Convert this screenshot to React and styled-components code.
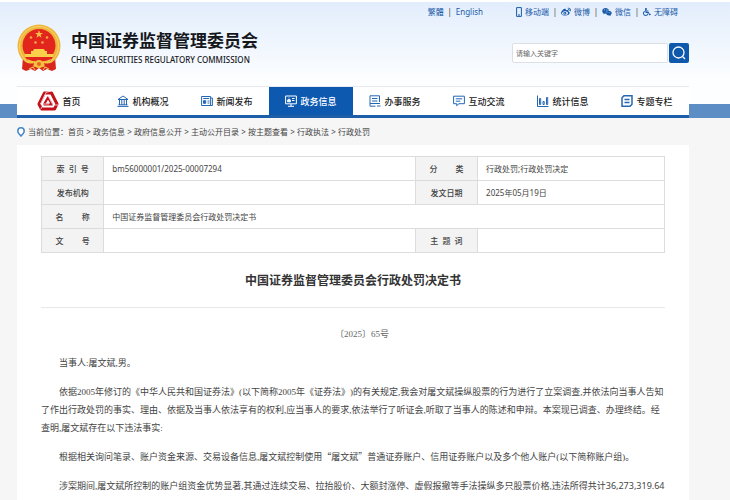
import React from "react";
import styled, { createGlobalStyle } from "styled-components";
import { FaWeibo, FaWeixin, FaWheelchair } from "react-icons/fa";

const SANS = `"Noto Sans", "Noto Sans CJK SC", sans-serif`;
const SERIF = `"Liberation Serif", "Noto Sans CJK SC", serif`;

const navItems = [
  { label: "首页", icon: "home" },
  { label: "机构概况", icon: "bank" },
  { label: "新闻发布", icon: "news" },
  { label: "政务信息", icon: "screen", active: true },
  { label: "办事服务", icon: "service" },
  { label: "互动交流", icon: "chat" },
  { label: "统计信息", icon: "stats" },
  { label: "专题专栏", icon: "topic" },
];

const crumbs = [
  "首页",
  "政务信息",
  "政府信息公开",
  "主动公开目录",
  "按主题查看",
  "行政执法",
  "行政处罚",
];

const Emblem = () => (
  <EmblemSvg viewBox="0 0 44 47" aria-hidden="true">
    <path d="M6 33L5 45l4 2 5-2 4 2 4-3 4 3 4-2 5 2 4-2-1-12z" fill="#d9261c" />
    <circle cx="22" cy="22" r="21.5" fill="#efb63c" />
    <circle cx="22" cy="22" r="19.5" fill="none" stroke="#f8d470" strokeWidth="1" />
    <circle cx="22" cy="21.5" r="16.5" fill="#e3261d" />
    <path d="M22 6l1 3h3l-2.400 1.800.9 2.900L22 12l-2.500 1.700.9-2.900L18 9h3z" fill="#fbc04a" />
    <g fill="#f7a545">
      <circle cx="14" cy="13.500" r="1.300" />
      <circle cx="30" cy="13.500" r="1.300" />
      <circle cx="18.500" cy="18.500" r="1.300" />
      <circle cx="25.500" cy="18.500" r="1.300" />
    </g>
    <path d="M17 25h10l1 2h-12zM14 27h16v3H14zM8 30h28v3H8z" fill="#fbd04a" />
    <path d="M8 33h28l-3 4H11z" fill="#e3261d" />
    <path d="M10 35q12 6 24 0l-2 4q-10 5-20 0z" fill="#f6c33f" />
    <circle cx="22" cy="40" r="4" fill="#f4c03f" />
    <circle cx="22" cy="40" r="2" fill="#e5622a" />
    <path d="M6 36q5 5 11 3l-1 4q-5 1-10-1zM38 36q-5 5-11 3l1 4q5 1 10-1z" fill="#d9261c" />
    <path d="M12 45l4-2 2 3M32 45l-4-2-2 3" stroke="#f6cf5d" fill="none" />
  </EmblemSvg>
);

const HomeMark = () => (
  <HomeSvg viewBox="0 0 22 20" aria-hidden="true">
    <g fill="none" stroke="#c4101a" strokeWidth="3" strokeLinejoin="round">
      <path d="M7.500 2h7l5.500 11-2.500 5h-13L2 13z" />
      <path d="M11 6.500l4 7H7z" strokeWidth="2.200" />
    </g>
    <g fill="none" stroke="#fff" strokeWidth="0.700">
      <path d="M14 0L9 1.500 3.500 13H12" />
      <path d="M21 14h-5L10.500 4" />
      <path d="M3.500 18.500L6.500 13.500" />
    </g>
  </HomeSvg>
);

const iconShapes = {
  bank: (
    <>
      <path d="M1 4.500L6 1l5 3.500zM0.500 11.400h11M1.500 9.800h9" />
      <path d="M2.500 5v5M4.800 5v5M7.200 5v5M9.500 5v5" />
    </>
  ),
  news: (
    <>
      <path d="M0.600 1.500h9v9h-9zM9.600 3h1.800v7.500H9" />
      <path d="M2.200 3.500h6M6.500 6h2M6.500 8h2" />
      <path d="M2.500 5.700h2.200v2.600H2.500z" fill="currentColor" />
    </>
  ),
  screen: (
    <>
      <path d="M0.600 1h10.800v7.800H0.600zM6 9v2M3 11.300h6" />
      <path d="M2.500 5.500q0-1 1-1h1q1 0 1 1v1.300h-3z" fill="currentColor" />
      <path d="M3.600 3h0.800M7 3.500h2.500M7 5.500h2.500" />
    </>
  ),
  service: (
    <>
      <path d="M10.500 7V0.800H1v10.400h5.500" />
      <path d="M3 3.500h5.500M3 6h5.500M1 8.500h10M8 11h3.500" />
    </>
  ),
  chat: (
    <>
      <path d="M0.600 1.200h10.800v7.500H6l-2.300 2V8.700H0.600z" />
      <path d="M2.800 3.800h6.500M2.800 6.200h4.500" />
    </>
  ),
  stats: (
    <>
      <path d="M0.500 0.500v11h11" />
      <path d="M2.500 3.500h1.200V9.500H2.500zM6 6.500h1.200v3H6zM9.500 2.500h1.200v7H9.500z" />
    </>
  ),
  topic: (
    <>
      <path d="M3 0.700h8v8.600L9 11.300H1V2.700z" strokeWidth="1.500" />
      <path d="M3.500 4.500h5M3.500 7.500h5" strokeWidth="1.300" />
    </>
  ),
};

const NavIcon = ({ name }) =>
  name === "home" ? (
    <HomeMark />
  ) : (
    <LineIcon viewBox="0 0 12 12" aria-hidden="true">
      {iconShapes[name]}
    </LineIcon>
  );

const App = () => {
  return (
    <>
      <GlobalStyle />
      <Page>
        <Header>
          <Container>
            <HeaderInner>
              <Brand href="#">
                <Emblem />
                <BrandText>
                  <BrandName>中国证券监督管理委员会</BrandName>
                  <BrandEnglish>CHINA SECURITIES REGULATORY COMMISSION</BrandEnglish>
                </BrandText>
              </Brand>
              <Tools>
                <TopLinks>
                  <LinkGroup>
                    <TopLink href="#">繁體</TopLink>
                    <Bar>|</Bar>
                    <TopLink href="#">English</TopLink>
                  </LinkGroup>
                  <LinkGroup>
                    <TopLink href="#">
                      <PhoneIcon viewBox="0 0 6 10" aria-hidden="true">
                        <path d="M0.600 0.600h4.800v8.800H0.600zM2 8h2" />
                      </PhoneIcon>
                      移动端
                    </TopLink>
                    <Bar>|</Bar>
                    <TopLink href="#">
                      <FaWeibo size={10} />
                      微博
                    </TopLink>
                    <Bar>|</Bar>
                    <TopLink href="#">
                      <FaWeixin size={10} />
                      微信
                    </TopLink>
                    <Bar>|</Bar>
                    <TopLink href="#">
                      <FaWheelchair size={8} />
                      无障碍
                    </TopLink>
                  </LinkGroup>
                </TopLinks>
                <Search onSubmit={(e) => e.preventDefault()}>
                  <SearchInput aria-label="请输入关键字" placeholder="请输入关键字" />
                  <SearchButton aria-label="搜索">
                    <svg viewBox="0 0 14 14" width="14" height="14" aria-hidden="true">
                      <circle cx="6.500" cy="6.500" r="5.500" />
                      <path d="M10.500 10.500l2.500 2.500" />
                    </svg>
                  </SearchButton>
                </Search>
              </Tools>
            </HeaderInner>
          </Container>
          <NavBand>
            <Container>
              <Nav>
                {navItems.map((item) => (
                  <NavLink href="#" key={item.label} $active={item.active}>
                    <NavIcon name={item.icon} />
                    {item.label}
                  </NavLink>
                ))}
              </Nav>
            </Container>
          </NavBand>
        </Header>

        <Container>
          <Breadcrumb>
            <PinIcon viewBox="0 0 8 10" aria-hidden="true">
              <path d="M4 9L1.800 6.500Q0.800 5.300 0.800 4a3.200 3.200 0 0 1 6.400 0Q7.200 5.300 6.200 6.500z" />
            </PinIcon>
            <span>当前位置：</span>
            {crumbs.map((crumb, i) => (
              <React.Fragment key={crumb}>
                {i > 0 && <Arrow>&gt;</Arrow>}
                <a href="#">{crumb}</a>
              </React.Fragment>
            ))}
          </Breadcrumb>
        </Container>

        <Panel>
          <InfoTable>
            <colgroup>
              <Col $width="10%" />
              <Col $width="50%" />
              <Col $width="10%" />
              <Col $width="30%" />
            </colgroup>
            <tbody>
              <tr>
                <Label>索&nbsp;&nbsp;引&nbsp;&nbsp;号</Label>
                <Value>bm56000001/2025-00007294</Value>
                <Label>分&#12288;&#12288;&nbsp;类</Label>
                <Value>行政处罚;行政处罚决定</Value>
              </tr>
              <tr>
                <Label>发布机构</Label>
                <Value />
                <Label>发文日期</Label>
                <Value>2025年05月19日</Value>
              </tr>
              <tr>
                <Label>名&#12288;&#12288;&nbsp;称</Label>
                <Value colSpan={3}>中国证券监督管理委员会行政处罚决定书</Value>
              </tr>
              <tr>
                <Label>文&#12288;&#12288;&nbsp;号</Label>
                <Value />
                <Label>主&nbsp;&nbsp;题&nbsp;&nbsp;词</Label>
                <Value />
              </tr>
            </tbody>
          </InfoTable>

          <Title>中国证券监督管理委员会行政处罚决定书</Title>

          <Article>
            <DocNumber>〔2025〕65号</DocNumber>
            <p>当事人:屠文斌,男。</p>
            <p>
              依据2005年修订的《中华人民共和国证券法》(以下简称2005年《证券法》)的有关规定,我会对屠文斌操纵股票的行为进行了立案调查,并依法向当事人告知了作出行政处罚的事实、理由、依据及当事人依法享有的权利,应当事人的要求,依法举行了听证会,听取了当事人的陈述和申辩。本案现已调查、办理终结。经查明,屠文斌存在以下违法事实:
            </p>
            <p>
              根据相关询问笔录、账户资金来源、交易设备信息,屠文斌控制使用<Quoted>“屠文斌”</Quoted>普通证券账户、信用证券账户以及多个他人账户(以下简称账户组)。
            </p>
            <p>
              涉案期间,屠文斌所控制的账户组资金优势显著,其通过连续交易、拉抬股价、大额封涨停、虚假报撤等手法操纵多只股票价格,违法所得共计<Figure>36,273,319.64</Figure>
            </p>
          </Article>
        </Panel>
      </Page>
    </>
  );
};

export default App;

const GlobalStyle = createGlobalStyle`
  * {
    box-sizing: border-box;
  }

  body {
    margin: 0;
    background: #f6f6f6;
    color: #444;
    font-family: ${SANS};
    font-size: 8px;
    text-spacing-trim: space-all;
  }

  a {
    color: inherit;
    text-decoration: none;
  }

  svg {
    flex-shrink: 0;
  }
`;

const Page = styled.div`
  min-height: 100vh;
  display: flex;
  flex-direction: column;
`;

const Container = styled.div`
  margin: 0 41px 0 17px;
`;

const Header = styled.header`
  border-top: 2px solid #fff;
  background: linear-gradient(#e2edfc, #fdfeff 80px);
`;

const HeaderInner = styled.div`
  display: flex;
  justify-content: space-between;
  height: 84px;
`;

const Brand = styled.a`
  display: flex;
  align-items: flex-start;
  gap: 10px;
  padding-top: 22px;
`;

const EmblemSvg = styled.svg`
  width: 44px;
  height: 47px;
`;

const BrandText = styled.div`
  color: #15181c;
  padding-top: 5px;
`;

const BrandName = styled.div`
  font-size: 17px;
  font-weight: 700;
  line-height: 24px;
`;

const BrandEnglish = styled.div`
  font-size: 8px;
  font-weight: 500;
  line-height: 14px;
`;

const Tools = styled.div`
  display: flex;
  flex-direction: column;
  align-items: flex-end;
`;

const TopLinks = styled.div`
  display: flex;
  gap: 33px;
  padding: 4px 11px 0 0;
  line-height: 12px;
  color: #1a5ba9;
`;

const LinkGroup = styled.div`
  display: flex;
  align-items: center;
`;

const TopLink = styled.a`
  display: flex;
  align-items: center;
  gap: 3px;
`;

const Bar = styled.span`
  width: 12px;
  text-align: center;
  color: #444;
`;

const PhoneIcon = styled.svg`
  width: 6px;
  height: 10px;
  fill: none;
  stroke: currentColor;
`;

const Search = styled.form`
  display: flex;
  gap: 1px;
  width: 177px;
  height: 20px;
  margin-top: 25px;
`;

const SearchInput = styled.input`
  flex: 1;
  min-width: 0;
  padding: 0 3px;
  border: 1px solid #dcdfe4;
  border-radius: 2px;
  background: #fff;
  font-family: ${SANS};
  font-size: 7px;

  &::placeholder {
    color: #666;
  }
`;

const SearchButton = styled.button`
  display: flex;
  align-items: center;
  justify-content: center;
  width: 20px;
  padding: 0;
  border: 0;
  border-radius: 2px;
  background: #0f59ad;

  svg {
    fill: none;
    stroke: #fff;
    stroke-width: 1.3;
  }
`;

const NavBand = styled.div`
  background: linear-gradient(transparent 18px, #5c8dc5 18px);
`;

const Nav = styled.nav`
  display: grid;
  grid-template-columns: repeat(8, 1fr);
  height: 32px;
  background: #fff;
  border-top: 1px solid #e6e9ee;
  border-bottom: 3px solid #1c5fa8;
`;

const NavLink = styled.a`
  display: flex;
  align-items: center;
  justify-content: center;
  gap: 3px;
  font-size: 9px;
  font-weight: 500;
  color: ${(props) => (props.$active ? "#fff" : "#222")};
  background: ${(props) => (props.$active ? "#0d59b0" : "transparent")};

  svg {
    color: ${(props) => (props.$active ? "#fff" : "#2468b4")};
  }
`;

const LineIcon = styled.svg`
  width: 12px;
  height: 12px;
  fill: none;
  stroke: currentColor;
`;

const HomeSvg = styled.svg`
  width: 22px;
  height: 20px;
`;

const Breadcrumb = styled.div`
  display: flex;
  align-items: center;
  height: 27px;
  color: #444;
`;

const PinIcon = styled.svg`
  width: 8px;
  height: 10px;
  margin-right: 3px;
  fill: #fff;
  stroke: #4385c7;
  stroke-width: 1.5;
`;

const Arrow = styled.span`
  width: 9px;
  text-align: center;
`;

const Panel = styled.main`
  flex: 1;
  margin: 0 41px 0 17px;
  padding: 11px 24px 0;
  background: #fff;
`;

const InfoTable = styled.table`
  width: 100%;
  border-collapse: collapse;
  table-layout: fixed;

  th,
  td {
    height: 24px;
    border: 1px solid #dcdcdc;
  }
`;

const Col = styled.col`
  width: ${(props) => props.$width};
`;

const Label = styled.th`
  padding: 0;
  background: #f3f3f3;
  font-weight: 500;
  text-align: center;
`;

const Value = styled.td`
  padding: 0 8px;
`;

const Title = styled.h1`
  margin: 0;
  padding: 19px 0 17px;
  border-bottom: 1px solid #e8e8e8;
  font-size: 12px;
  font-weight: 700;
  line-height: 18px;
  text-align: center;
  color: #333;
`;

const Article = styled.article`
  padding-top: 17px;
  font-family: ${SERIF};
  font-size: 9px;
  line-height: 18px;

  p {
    margin: 0 0 11px;
    text-indent: 2em;
  }

  p:last-child {
    margin: 0;
  }
`;

const DocNumber = styled.p`
  text-align: center;
  color: #666;
`;

const Quoted = styled.span`
  font-family: "Noto Sans CJK SC", sans-serif;
`;

const Figure = styled.span`
  font-family: ${SANS};
`;
